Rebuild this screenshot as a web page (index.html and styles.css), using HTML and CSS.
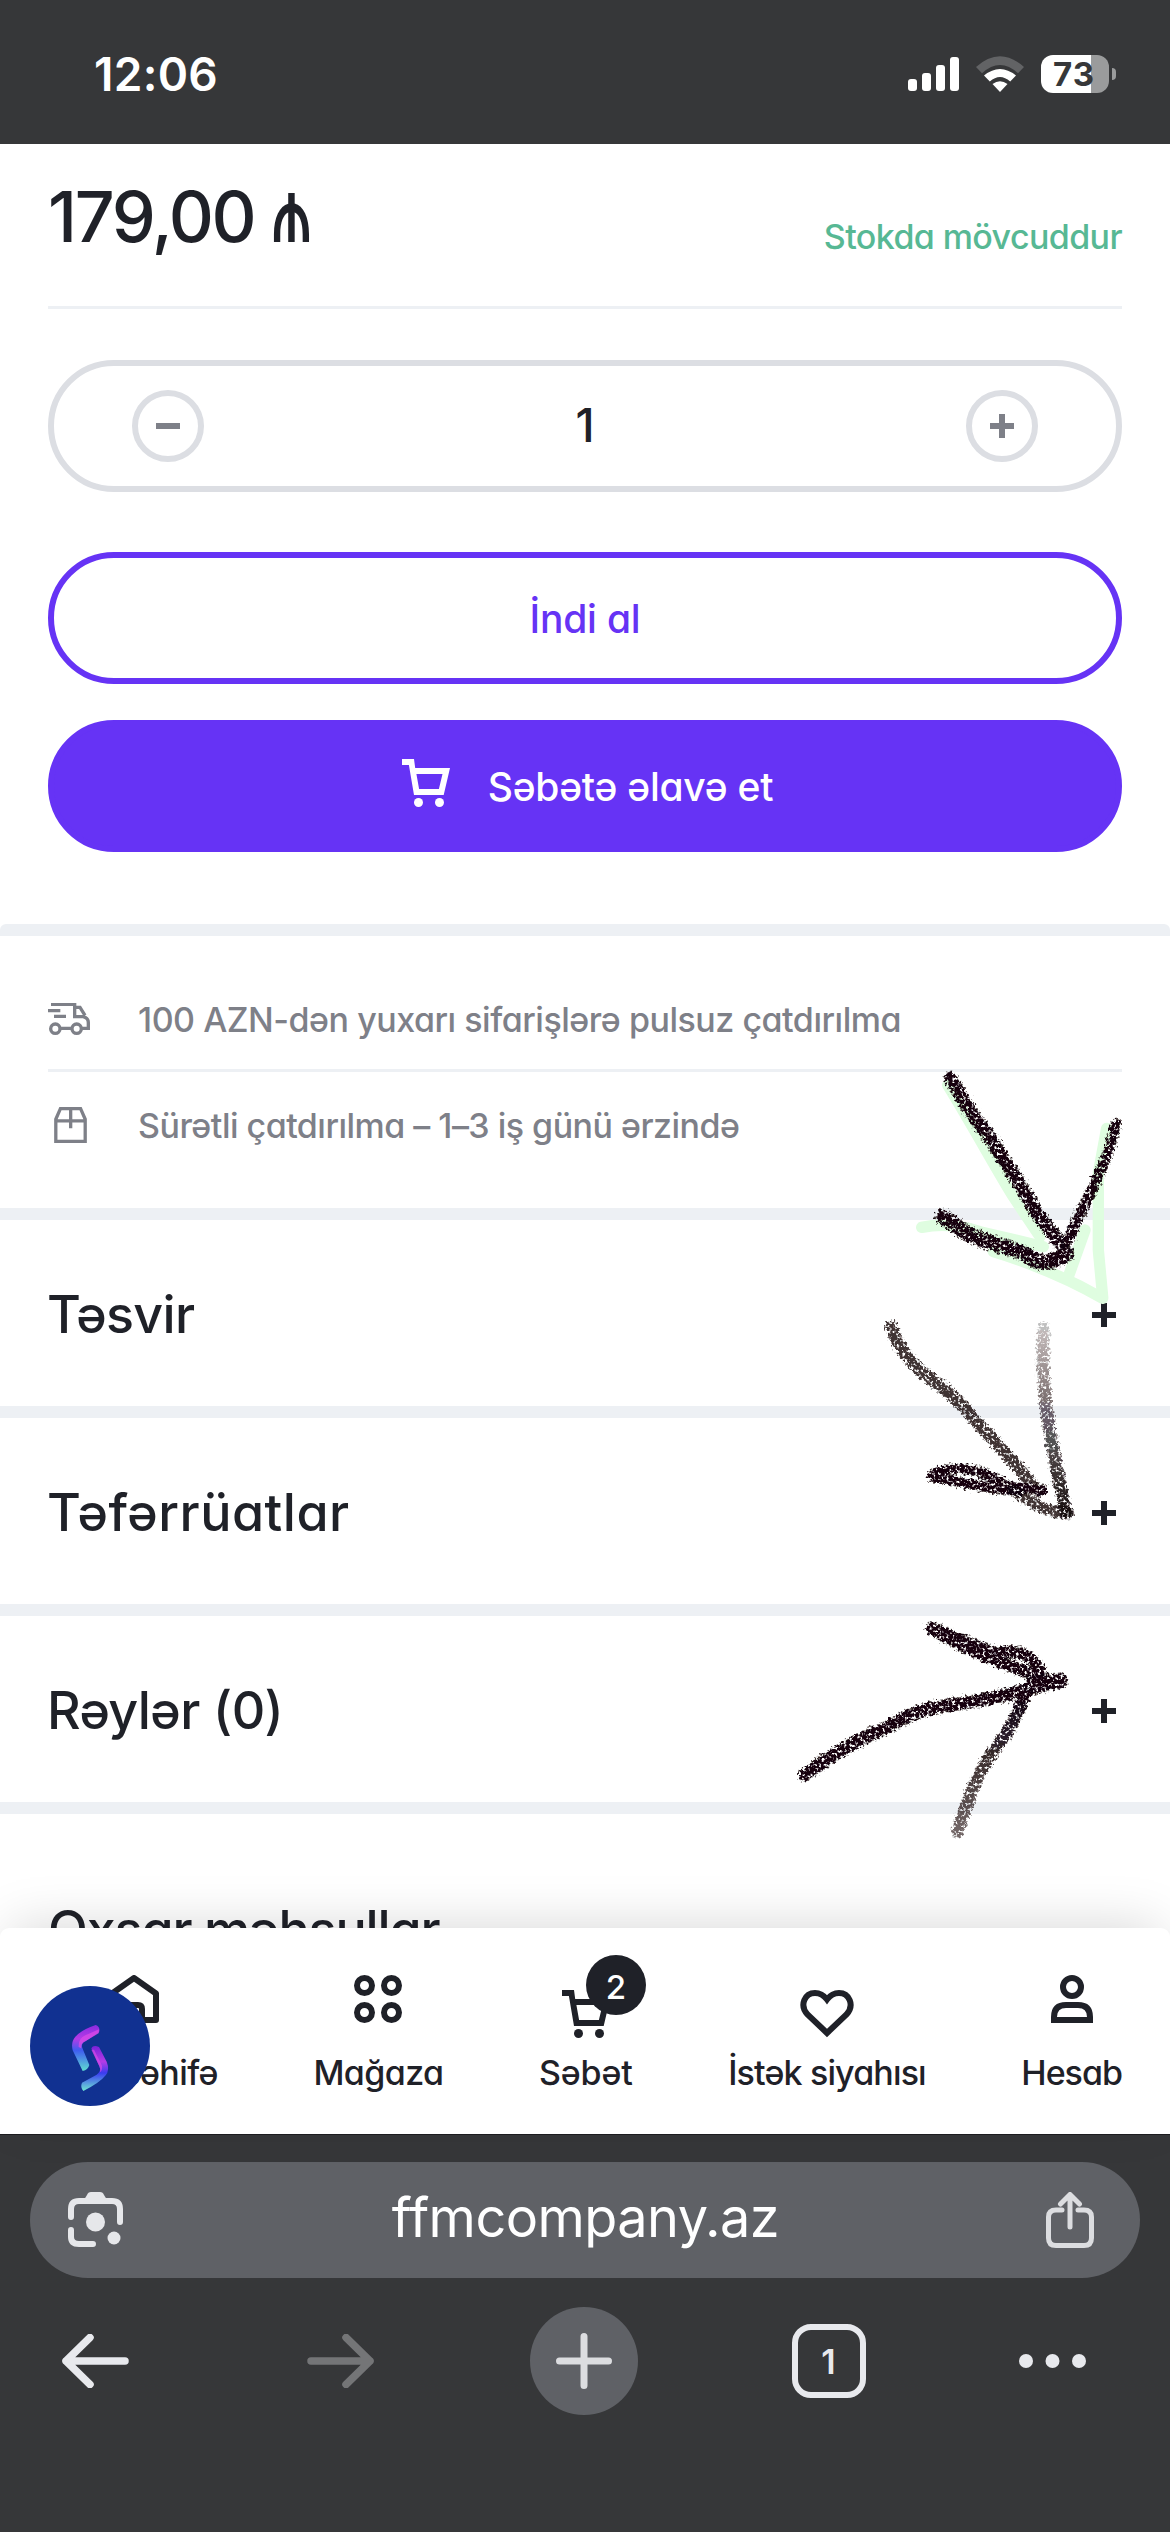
FILE: index.html
```html
<!DOCTYPE html>
<html lang="az">
<head>
<meta charset="utf-8">
<title>ffmcompany.az</title>
<link rel="stylesheet" href="styles.css">
</head>
<body>
<header class="status">
  <span class="time">12:06</span>
  <div class="status-icons">
    <svg class="signal" viewBox="0 0 51 34"><rect y="22" width="9" height="12" rx="3"/><rect x="14" y="16" width="9" height="18" rx="3"/><rect x="28" y="8" width="9" height="26" rx="3"/><rect x="42" width="9" height="34" rx="3"/></svg>
    <svg class="wifi" viewBox="0 0 50 36"><path class="dim" d="M1 11Q25-10.5 49 11L43 17.300Q25 .8 7 17.300Z"/><path d="M9 19.500Q25 6.500 41 19.500L35.200 25.500Q25 16.500 14.800 25.500Z"/><path d="M17.500 28Q25 22.500 32.500 28L25 36Z"/></svg>
    <div class="battery"><span>73</span></div><i class="battery-tip"></i>
  </div>
</header>
<main class="page">
  <section class="buy">
    <div class="price-row">
      <div class="price"><span>179,00</span><span class="manat">₼</span></div>
      <span class="stock">Stokda mövcuddur</span>
    </div>
    <div class="qty">
      <button class="round"><svg viewBox="0 0 24 24"><path d="M0 9H24V15H0Z"/></svg></button>
      <span class="count">1</span>
      <button class="round"><svg viewBox="0 0 24 24"><path d="M0 9H9V0H15V9H24V15H15V24H9V15H0Z"/></svg></button>
    </div>
    <button class="btn outline"><span>İndi al</span></button>
    <button class="btn solid"><svg viewBox="0 0 16 16"><path fill-rule="evenodd" d="M0 0H4L4.400 3H16L13.900 12H4L2.300 2H0ZM4.800 5L5.700 10H12.300L13.500 5Z"/><circle cx="5.500" cy="14.500" r="1.500"/><circle cx="12.500" cy="14.500" r="1.500"/></svg><span>Səbətə əlavə et</span></button>
  </section>
  <ul class="perks">
    <li><svg class="truck" viewBox="54 75 126 96"><path d="M63 79H134V116H160Q175 120 175 134V151H156M54 98H91M72 115H108M134 88H150L165 112M91 151H125"/><circle cx="76" cy="152" r="14"/><circle cx="140" cy="152" r="14"/></svg><span class="perk-a">100 AZN-dən yuxarı sifarişlərə pulsuz çatdırılma</span></li>
    <li><svg class="box" viewBox="72 380 99 109"><path d="M77 417L91 385H152L166 417V484H77ZM77 422H166M122 385V444"/></svg><span class="perk-b">Sürətli çatdırılma – 1–3 iş günü ərzində</span></li>
  </ul>
  <section class="fold"><h2 class="f1">Təsvir</h2><svg viewBox="0 0 24 24"><path d="M0 9H9V0H15V9H24V15H15V24H9V15H0Z"/></svg></section>
  <section class="fold"><h2 class="f2">Təfərrüatlar</h2><svg viewBox="0 0 24 24"><path d="M0 9H9V0H15V9H24V15H15V24H9V15H0Z"/></svg></section>
  <section class="fold"><h2 class="f3">Rəylər (0)</h2><svg viewBox="0 0 24 24"><path d="M0 9H9V0H15V9H24V15H15V24H9V15H0Z"/></svg></section>
  <section class="related"><h2>Oxşar məhsullar</h2></section>
  <svg class="sketch" viewBox="0 0 1170 2490" fill="none">
    <defs>
      <filter id="crayon" filterUnits="userSpaceOnUse" x="0" y="0" width="1170" height="2490">
        <feTurbulence type="fractalNoise" baseFrequency=".12" numOctaves="3" seed="4" result="n"/>
        <feDisplacementMap in="SourceGraphic" in2="n" scale="26" xChannelSelector="R" yChannelSelector="G" result="d"/>
        <feColorMatrix in="n" values="0 0 0 0 0  0 0 0 0 0  0 0 0 0 0  0 0 5 0 -1.350" result="g"/>
        <feComposite in="d" in2="g" operator="in"/>
      </filter>
      <linearGradient id="fade" gradientUnits="userSpaceOnUse" x1="0" y1="830" x2="0" y2="1390"><stop stop-color="#160a0c" stop-opacity=".25"/><stop offset=".5" stop-color="#160a0c" stop-opacity=".65"/><stop offset="1" stop-color="#160a0c"/></linearGradient>
      <linearGradient id="tail" gradientUnits="userSpaceOnUse" x1="0" y1="1945" x2="0" y2="2350"><stop stop-color="#120608"/><stop offset="1" stop-color="#120608" stop-opacity=".6"/></linearGradient>
    </defs>
    <g class="halo">
      <path d="M503 105C580 230 650 360 700 440L780 560"/>
      <path d="M425 532Q510 515 600 545L790 590M640 605Q820 660 968 745"/>
      <path d="M980 235L955 370L955 600L968 740M915 540L865 680"/>
    </g>
    <g class="ink" filter="url(#crayon)">
      <path d="M512 85Q570 190 625 255L665 320Q720 400 770 490L850 590" stroke-width="40"/>
      <path d="M490 500Q560 560 640 580Q720 600 765 630Q800 650 860 612" stroke-width="46"/>
      <path d="M1008 222Q985 320 945 400T862 575" stroke-width="31"/>
      <path d="M333 830Q370 930 450 985Q540 1050 570 1095Q690 1220 775 1325" stroke-width="36" opacity=".8"/>
      <path d="M455 1275Q560 1225 685 1310L790 1320M455 1278Q580 1310 720 1325" stroke-width="31"/>
      <path d="M700 1320Q780 1385 865 1390" stroke-width="33" opacity=".8"/>
      <path d="M790 835Q785 1000 805 1120T858 1390" stroke="url(#fade)" stroke-width="36"/>
      <path d="M75 2175Q200 2080 310 2038Q420 1970 520 1965Q700 1935 838 1892" stroke-width="38"/>
      <path d="M455 1733Q560 1780 650 1810Q760 1790 785 1880M460 1740Q600 1820 775 1878" stroke-width="36"/>
      <path d="M755 1900L840 1893" stroke-width="44"/>
      <path d="M735 1935Q700 2030 650 2090Q580 2180 533 2345" stroke="url(#tail)" stroke-width="36"/>
    </g>
  </svg>
</main>
<nav class="tabs">
  <a><svg class="i50" viewBox="0 0 50 48"><path class="line" d="M3 44V18.500L25 3L47 18.500V45H33V34Q33 30 29 30H21Q17 30 17 34V45H3Z"/></svg><span class="t1">Ana səhifə</span></a>
  <a><svg class="i48" viewBox="0 0 48 48"><g class="line"><circle cx="10.500" cy="10.500" r="7.500"/><circle cx="37.500" cy="10.500" r="7.500"/><circle cx="10.500" cy="37.500" r="7.500"/><circle cx="37.500" cy="37.500" r="7.500"/></g></svg><span class="t2">Mağaza</span></a>
  <a class="low"><svg class="i48" viewBox="0 0 16 16"><path fill-rule="evenodd" d="M0 0H4L4.400 3H16L13.900 12H4L2.300 2H0ZM4.800 5L5.700 10H12.300L13.500 5Z"/><circle cx="5.500" cy="14.500" r="1.500"/><circle cx="12.500" cy="14.500" r="1.500"/></svg><b class="badge">2</b><span class="t3">Səbət</span></a>
  <a class="low"><svg class="i54" viewBox="0 0 54 48"><path class="line" d="M27 43L7.500 24.500C-1 15 5 3 15 3Q22 3 27 9.500Q32 3 39 3C49 3 55 15 46.500 24.500Z"/></svg><span class="t4">İstək siyahısı</span></a>
  <a><svg class="i42" viewBox="0 0 42 48"><g class="line"><rect x="12" y="3" width="18" height="18" rx="9"/><path d="M3 45V42Q3 30 15 30H27Q39 30 39 42V45Z"/></g></svg><span class="t5">Hesab</span></a>
  <div class="chat"><svg viewBox="150 190 120 210">
    <defs><linearGradient id="ga" x1="0" y1="0" x2="0" y2="1"><stop offset="0" stop-color="#8a2be0"/><stop offset=".3" stop-color="#b43be6"/><stop offset=".55" stop-color="#3f5cf0"/><stop offset="1" stop-color="#5fdcd0"/></linearGradient>
    <linearGradient id="gb" x1="0" y1="0" x2="0" y2="1"><stop offset="0" stop-color="#7a22d8"/><stop offset=".35" stop-color="#b43be6"/><stop offset=".6" stop-color="#3a3cf0"/><stop offset="1" stop-color="#6fe6d2"/></linearGradient></defs>
    <path fill="url(#ga)" d="M227 196Q242 202 237 218L196 245Q181 252 188 267L208 316Q204 331 188 334L158 272Q152 247 166 231Q185 210 227 196Z"/><path fill="#d94be8" opacity=".75" d="M237 209L196 227Q174 237 176 262L184 266Q181 252 196 245L236 221Z"/>
    <path fill="url(#gb)" d="M214 266Q220 254 237 262L260 306Q270 331 257 347Q240 369 190 394Q180 382 186 369L230 345Q245 335 238 320Z"/><path fill="#d94be8" opacity=".65" d="M222 270L246 318Q248 332 240 338Q243 330 238 320L214 270Z"/>
  </svg></div>
</nav>
<footer class="browser">
  <div class="url">
    <svg class="lens" viewBox="0 0 55 56"><path d="M3 25V17Q3 9 11 9H44Q52 9 52 17V30M3 38V45Q3 52 11 52H25" /><path class="fill" d="M14 11L19 3Q20 0 23 0H32Q35 0 36 3L41 11Z"/><circle class="fill" cx="27.500" cy="30" r="9.500"/><circle class="fill" cx="46" cy="46" r="6.500"/></svg>
    <span>ffmcompany.az</span>
    <svg class="share" viewBox="0 0 48 56"><path d="M16 18H10Q2.500 18 2.500 25V46Q2.500 53.500 10 53.500H38Q45.500 53.500 45.500 46V25Q45.500 18 38 18H32M24 35V3M14.500 12L24 2.500L33.500 12"/></svg>
  </div>
  <div class="tools">
    <svg class="arrow" viewBox="0 0 67 54"><path d="M63 27H4M28 3.500L4 27L28 50.500"/></svg>
    <svg class="arrow off" viewBox="0 0 67 54"><path d="M4 27H63M39 3.500L63 27L39 50.500"/></svg>
    <div class="new"><svg viewBox="0 0 56 56"><path d="M28 3.500V52.500M3.500 28H52.500"/></svg></div>
    <div class="count-tab">1</div>
    <svg class="dots" viewBox="0 0 67 14"><circle cx="7" cy="7" r="7"/><circle cx="33.500" cy="7" r="7"/><circle cx="60" cy="7" r="7"/></svg>
  </div>
</footer>
</body>
</html>
```
FILE: styles.css
```css
* { box-sizing: border-box; margin: 0; padding: 0; }
body { width: 1170px; height: 2532px; overflow: hidden; display: flex; flex-direction: column; background: #fff; color: #1f2128; font-family: "Inter", "Noto Sans", sans-serif; font-weight: 540; font-feature-settings: "cv11"; }
button { font: inherit; font-feature-settings: inherit; background: none; }
svg { display: block; flex: none; }
ul { list-style: none; }

.status { height: 144px; flex: none; background: #363739; color: #fff; display: flex; justify-content: space-between; align-items: center; padding: 4px 54px 0 94px; }
.time { font-size: 46px; font-weight: 600; letter-spacing: .3px; }
.status-icons { display: flex; align-items: center; fill: #fff; }
.signal { width: 51px; height: 34px; margin-right: 16px; }
.wifi { width: 50px; height: 36px; margin-right: 16px; }
.wifi .dim { fill: #626365; }
.battery { width: 68px; height: 38px; border-radius: 12px; background: linear-gradient(90deg, #fff 50px, #9a9b9c 50px); color: #363739; font-size: 33px; font-weight: 700; line-height: 38px; text-align: center; letter-spacing: 1px; }
.battery span { margin-right: 2px; }
.battery-tip { width: 4px; height: 12px; margin-left: 3px; border-radius: 0 4px 4px 0; background: #9a9b9c; }

.page { position: relative; height: 1784px; flex: none; overflow: hidden; }
.buy { height: 780px; padding: 0 48px; }
.price-row { height: 165px; border-bottom: 3px solid #edf0f4; display: flex; justify-content: space-between; margin-bottom: 51px; }
.price { display: flex; font-size: 70px; line-height: 146px; letter-spacing: -2.300px; }
.manat { letter-spacing: 0; margin-left: 14px; transform: scale(.84, 1.29); transform-origin: 4px 98px; }
.stock { font-size: 34px; line-height: 186px; letter-spacing: -.6px; color: #57b894; }
.qty { height: 132px; border: 6px solid #dcdee3; border-radius: 66px; display: flex; align-items: center; justify-content: space-between; padding: 0 78px; margin-bottom: 60px; }
.round { width: 72px; height: 72px; border: 6px solid #dcdee3; border-radius: 50%; display: grid; place-items: center; }
.round svg { width: 24px; height: 24px; fill: #7e8088; }
.count { font-size: 46px; line-height: 1; margin-top: -2px; }
.btn { width: 100%; height: 132px; border: 6px solid #6633f5; border-radius: 66px; display: flex; align-items: center; justify-content: center; font-size: 39px; }
.outline { color: #6633f5; letter-spacing: -.2px; margin-bottom: 36px; }
.solid { background: #6633f5; color: #fff; letter-spacing: -.25px; padding-left: 5px; }
.solid svg { width: 48px; height: 48px; fill: #fff; margin: -6px 38px 0 0; }

.perks { height: 296px; border-top: 12px solid #edf0f4; border-bottom: 12px solid #edf0f4; border-radius: 6px 6px 0 0; padding: 31px 48px 0; color: #7e8088; font-size: 34px; }
.perks li { height: 105px; display: flex; align-items: center; }
.perks li:first-child { border-bottom: 3px solid #edf0f4; padding-top: 2px; }
.perks svg { fill: none; stroke: #7e8088; }
.truck { width: 42px; height: 32px; margin-right: 48px; stroke-width: 10; }
.box { width: 33px; height: 36px; margin: 0 51px 0 6px; stroke-width: 10; }
.perk-a { letter-spacing: -.48px; }
.perk-b { letter-spacing: -.52px; padding-top: 1px; }
.fold { height: 198px; border-bottom: 12px solid #edf0f4; padding: 4px 54px 0 47px; display: flex; align-items: center; justify-content: space-between; }
.fold svg { width: 24px; height: 24px; fill: #1f2128; }
h2 { font-size: 52px; line-height: 60px; font-weight: 540; }
.f1 { letter-spacing: -.7px; }
.f2 { letter-spacing: .5px; }
.f3 { letter-spacing: -.6px; }
.related { padding: 86px 48px 0; }
.related h2 { letter-spacing: -1.150px; }
.sketch { position: absolute; left: 780px; top: 906px; width: 390px; height: 830px; stroke-linecap: round; stroke-linejoin: round; }
.halo { stroke: #dffde0; stroke-width: 34; }
.ink { stroke: #120608; }

.tabs { position: relative; height: 207px; flex: none; background: #fff; border-radius: 9px 9px 0 0; border-bottom: 1px solid #1c1c1f; box-shadow: 0 -12px 50px -12px rgba(0,0,0,.17); display: flex; justify-content: space-between; padding: 47px 48px 0 50px; font-size: 34px; }
.tabs a { position: relative; display: flex; flex-direction: column; align-items: center; justify-content: space-between; height: 118px; }
.tabs .low { padding-top: 15px; }
.tabs a span { line-height: 40px; }
.tabs a svg { fill: #1f2128; }
.tabs .line { fill: none; stroke: #1f2128; stroke-width: 6; stroke-linejoin: round; }
.i42 { width: 42px; height: 48px; }
.i48 { width: 48px; height: 48px; }
.i50 { width: 50px; height: 48px; }
.i54 { width: 54px; height: 48px; }
.i42 .line path, .i54 .line { stroke-linejoin: miter; }
.t1 { letter-spacing: -.6px; }
.t2 { letter-spacing: -.6px; }
.t3 { letter-spacing: -.15px; }
.t4 { letter-spacing: -.85px; }
.t5 { letter-spacing: -1px; }
.badge { position: absolute; left: 47px; top: -20px; width: 60px; height: 60px; border-radius: 50%; background: #1f2128; color: #fff; font-size: 33px; font-weight: 500; line-height: 65px; text-align: center; }
.chat { position: absolute; left: 30px; top: 58px; width: 120px; height: 120px; border-radius: 50%; background: #113191; padding: 37px 0 0 40px; }
.chat svg { width: 40px; height: 70px; }

.browser { flex: 1; background: #363739; padding: 27px 30px 0; }
.url { height: 116px; border-radius: 58px; background: #5f6166; color: #fff; display: flex; align-items: center; justify-content: space-between; padding: 0 46px 0 38px; font-size: 54px; font-weight: 400; letter-spacing: -.55px; }
.url span { margin: -5px 0 0 2px; font-feature-settings: normal; }
.lens, .share { height: 56px; fill: none; stroke: #e6e7ea; stroke-linecap: round; stroke-linejoin: round; }
.lens { width: 55px; stroke-width: 6; }
.lens .fill { fill: #e6e7ea; stroke: none; }
.share { width: 48px; stroke: #dcdde0; stroke-width: 5; }
.tools { height: 108px; margin-top: 29px; padding: 0 54px 0 32px; display: flex; align-items: center; justify-content: space-between; }
.arrow { width: 67px; height: 54px; fill: none; stroke: #e8e9ed; stroke-width: 7.500; stroke-linecap: round; stroke-linejoin: round; }
.off { stroke: #747577; margin-left: 24px; }
.new { width: 108px; height: 108px; border-radius: 50%; background: #5f6166; display: grid; place-items: center; margin-left: 3px; }
.new svg { width: 56px; height: 56px; stroke: #dcdde0; stroke-width: 7; stroke-linecap: round; }
.count-tab { width: 74px; height: 74px; border: 6px solid #e8e9ed; border-radius: 19px; color: #e8e9ed; font-size: 34px; font-weight: 600; line-height: 63px; text-align: center; }
.dots { width: 67px; height: 14px; fill: #e8e9ed; }
```
